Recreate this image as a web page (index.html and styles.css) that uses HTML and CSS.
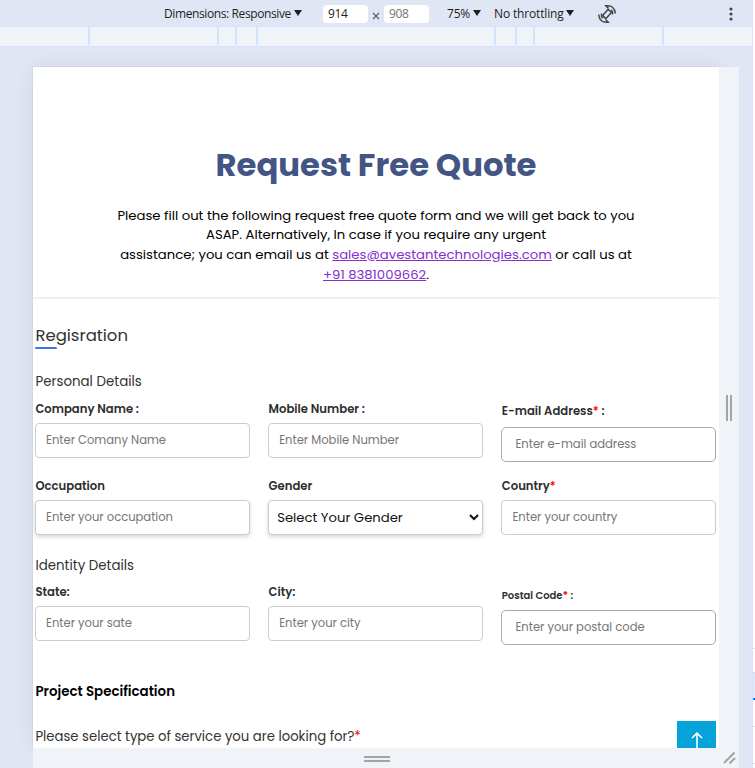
FILE: index.html
```html
<!DOCTYPE html>
<html lang="en">
<head>
<meta charset="utf-8">
<title>Request Free Quote</title>
<link rel="stylesheet" href="styles.css">
</head>
<body>
<div class="device">
  <header class="toolbar">
    <span class="tool dims">Dimensions: Responsive</span><i class="caret"></i>
    <span class="size first">914</span>
    <svg class="times" viewBox="0 0 8 8"><path d="M1 1l6 6M7 1L1 7"/></svg>
    <span class="size second">908</span>
    <span class="tool zoom">75%</span><i class="caret"></i>
    <span class="tool throttle">No throttling</span><i class="caret"></i>
    <svg class="rotate" viewBox="0 0 20 20"><g fill="none" stroke="#454746" stroke-width="1.5"><rect x="7.700" y="5.800" width="4.600" height="8.400" rx=".5" transform="rotate(42 10 10)"/><path d="M11.500 4.500L8.800 1.800Q17.500 .8 18.300 9.500M14.300 5.800Q16 7.500 15.500 10.500M8.500 15.500l2.700 2.700Q2.500 19.200 1.700 10.500M5.700 14.200Q4 12.500 4.500 9.500"/></g></svg>
    <svg class="more" viewBox="0 0 4 14"><circle cx="2" cy="2" r="1.600"/><circle cx="2" cy="7" r="1.600"/><circle cx="2" cy="12" r="1.600"/></svg>
  </header>
  <div class="ruler"><i></i><i></i><i></i><i></i><i></i><i></i><i></i><i></i><i></i></div>
  <div class="stage">
    <main class="page">
      <section class="hero">
        <h1>Request Free Quote</h1>
        <p>Please fill out the following request free quote form and we will get back to you<br>ASAP. Alternatively, In case if you require any urgent<br>assistance; you can email us at <a href="#">sales@avestantechnologies.com</a> or call us at<br><a href="#">+91 8381009662</a>.</p>
      </section>
      <form class="form">
        <h2>Regisration</h2>
        <h3>Personal Details</h3>
        <div class="grid personal">
          <label class="field">Company Name :<input placeholder="Enter Comany Name"></label>
          <label class="field">Mobile Number :<input placeholder="Enter Mobile Number"></label>
          <label class="field email"><span>E-mail Address<b>*</b> :</span><input class="dark" placeholder="Enter e-mail address"></label>
          <label class="field">Occupation<input class="raised" placeholder="Enter your occupation"></label>
          <label class="field">Gender<select class="raised"><option>Select Your Gender</option></select></label>
          <label class="field"><span>Country<b>*</b></span><input placeholder="Enter your country"></label>
        </div>
        <h3 class="identity-title">Identity Details</h3>
        <div class="grid identity">
          <label class="field">State:<input placeholder="Enter your sate"></label>
          <label class="field">City:<input placeholder="Enter your city"></label>
          <label class="field postal"><span>Postal Code<b>*</b> :</span><input class="dark" placeholder="Enter your postal code"></label>
        </div>
        <h4>Project Specification</h4>
        <p class="question">Please select type of service you are looking for?<b>*</b></p>
      </form>
      <a class="top" href="#"><svg viewBox="0 0 12 18"><path d="M6 18V1.500M1 6L6 1.200L11 6"/></svg></a>
    </main>
    <div class="handle right"><i></i><i></i></div>
    <div class="handle bottom"><i></i><i></i></div>
    <div class="corner"><svg viewBox="0 0 14 14"><path d="M1 12L11.500 1.500M6.500 12.500L12 7"/></svg></div>
  </div>
</div>
<aside class="panel"><i class="line"></i><i class="active"></i><i class="row"></i><i class="row last"></i></aside>
</body>
</html>
```
FILE: styles.css
```css
* { box-sizing: border-box; }
body { margin: 0; width: 755px; height: 768px; overflow: hidden; display: flex; background: #fff; font-family: Poppins, Inter, sans-serif; }
.device { width: 753px; height: 768px; background: #e0e6f4; border-right: 1px solid #d3e3fd; }

.toolbar { height: 26px; display: flex; align-items: center; padding: 1px 0 0 164px; font: 12px/24px "Open Sans", "Noto Sans", sans-serif; color: #1f1f1f; white-space: nowrap; }
.dims { width: 130px; letter-spacing: -.39px; }
.caret { width: 8px; height: 6px; background: #1f1f1f; clip-path: polygon(0 0, 100% 0, 50% 100%); margin-top: -1px; }
.size { width: 45px; height: 18px; line-height: 18px; padding-left: 5px; background: #fff; border-radius: 4px; letter-spacing: -.4px; }
.first { margin-left: 21px; }
.times { width: 8px; height: 8px; margin: 4px 4px 0; fill: none; stroke: #5f6368; stroke-width: 1.3; }
.second { color: #757575; }
.zoom { margin-left: 18px; width: 26px; letter-spacing: -.2px; }
.throttle { margin-left: 13px; width: 72px; letter-spacing: -.15px; }
.rotate { width: 20px; height: 20px; margin-left: 23px; }
.more { width: 4px; height: 14px; margin-left: 112px; fill: #454746; }

.ruler { height: 21px; display: flex; background: #f0f4f9; border: solid #d3e3fd; border-width: 1px 0; }
.ruler i { height: 18px; border-right: 2px solid #d3e3fd; flex: none; }
.ruler i:nth-child(1) { width: 90px; }
.ruler i:nth-child(2) { width: 129px; }
.ruler i:nth-child(3) { width: 18px; }
.ruler i:nth-child(4) { width: 21px; }
.ruler i:nth-child(5) { width: 238px; }
.ruler i:nth-child(6) { width: 21px; }
.ruler i:nth-child(7) { width: 18px; }
.ruler i:nth-child(8) { width: 129px; }
.ruler i:nth-child(9) { flex: 1; border: 0; }

.stage { display: grid; grid-template: 681px 20px / 686px 20px; padding: 20px 0 0 33px; isolation: isolate; }
.page { position: relative; background: #fff; overflow: hidden; color: #333; box-shadow: 0 0 1px rgba(60, 70, 90, .3), 0 0 18px rgba(60, 70, 90, .09); }
.handle { position: relative; display: flex; align-items: center; justify-content: center; gap: 2px; background: #f0f4f9; }
.handle i { background: #a3a3a3; }
.right i { width: 2px; height: 26px; }
.bottom { flex-direction: column; padding: 2px 0 0 2px; }
.bottom i { width: 26px; height: 2px; }
.corner { position: relative; background: #f0f4f9; display: flex; align-items: center; justify-content: center; padding-left: 1px; }
.corner svg { width: 14px; height: 14px; fill: none; stroke: #a3a3a3; stroke-width: 2; }

.hero { height: 230px; padding-top: 73px; text-align: center; box-shadow: 0 1px 3px rgba(0, 0, 0, .12); }
h1 { margin: 0; font-size: 32.250px; line-height: 50px; font-weight: 700; color: #435585; }
.hero p { margin: 15.500px 0 0; font-size: 13.230px; line-height: 19.700px; color: #000; white-space: nowrap; }
.hero a { color: #8430ce; }

.form { padding: 0 2px; }
h2, h3, h4 { margin: 0; }
h2, h3, h4, .question { padding-left: .4px; }
h2 { width: max-content; margin-top: 25px; font-size: 16.500px; line-height: 27px; font-weight: 400; }
h2::after { content: ""; display: block; width: 22px; height: 2.500px; border-radius: 1px; background: #4070f4; margin: -2.500px 0 0; }
h3 { margin-top: 23px; font-size: 13.400px; line-height: 20px; font-weight: 400; }
.grid { display: grid; grid-template-columns: repeat(3, 215px); column-gap: 18.200px; }
.personal { grid-auto-rows: 77px; margin-top: 7px; }
.identity { grid-auto-rows: 77px; margin-top: 6px; }
.identity-title { margin-top: 3px; }
.field { display: block; font-size: 11.650px; line-height: 20px; font-weight: 600; color: #2e2e2e; text-indent: .4px; }
.field b, .question b { color: #f00; font-weight: inherit; }
.field input, .field select { display: block; width: 215px; height: 35px; margin: 4px 0 0; padding: 0 10px; border: 1px solid #ccc; border-radius: 4px; background: #fff; font: 400 11.550px/20px Poppins, Inter, sans-serif; color: #333; outline: 0; }
.field input::placeholder { color: #757575; opacity: 1; }
.field input.dark { border-color: #aaa; border-radius: 5px; padding-left: 13px; }
.field .raised { box-shadow: 0 2px 4px rgba(0, 0, 0, .16); }
.field select { font-size: 13.200px; padding: 0 0 0 4px; color: #111; }
.email { padding-top: 2px; }
.email input { margin-top: 6px; }
.postal { padding-top: 4px; }
.postal span { display: block; height: 20px; font-size: 10px; }
.postal b { font-size: 11px; line-height: 10px; }
.postal input { margin-top: 4px; }
h4 { margin-top: 23px; font-size: 13.400px; line-height: 20px; font-weight: 600; color: #000; }
.question { margin: 25px 0 0; font-size: 13.240px; line-height: 20px; }
.top { position: absolute; right: 3px; bottom: 0; width: 39px; height: 27px; background: #06a3da; display: flex; justify-content: center; padding-top: 11px; }
.top svg { width: 12px; height: 18px; fill: none; stroke: #fff; stroke-width: 1.600; }

.panel { flex: 1; padding-top: 648px; }
.panel i { display: block; border-top: 1px solid #d3e3fd; }
.line { height: 24px; }
.active { height: 28px; background: #dfe7f8; border-bottom: 2px solid #1b6ef3; }
.row { height: 37px; margin-top: 26px; }
.last { margin-top: 0; }
```
